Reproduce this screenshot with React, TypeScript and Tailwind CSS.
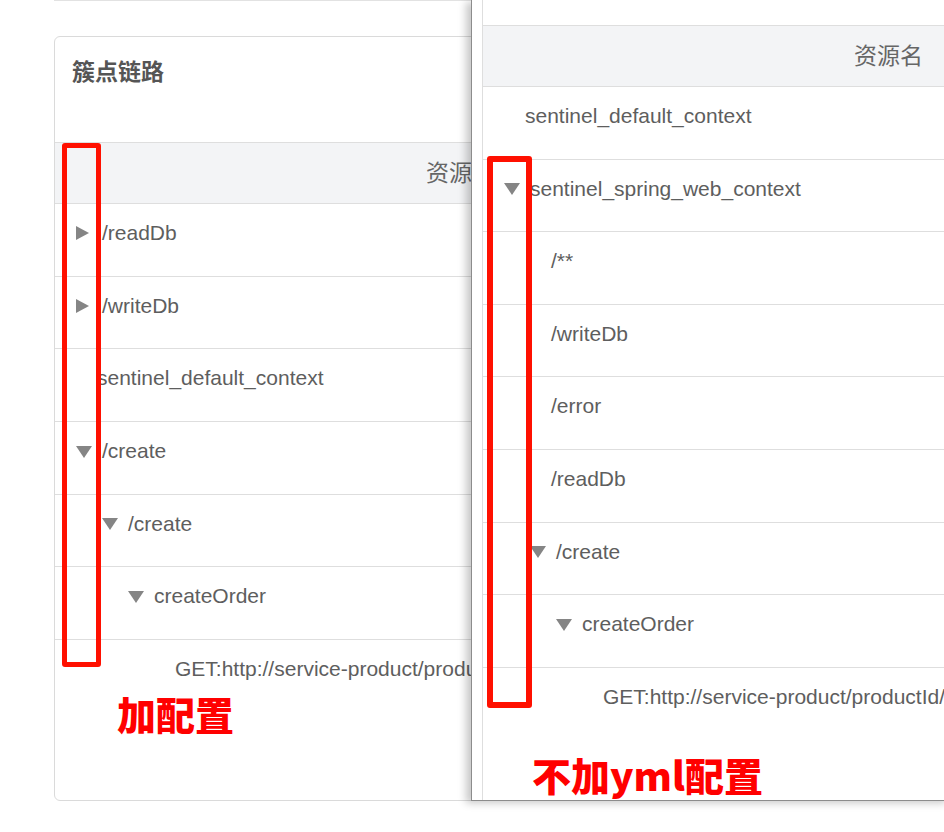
import React from 'react';

type Row = { name: string; depth: number; toggle?: 'open' | 'closed' };

const leftRows: Row[] = [
  { name: '/readDb', depth: 0, toggle: 'closed' },
  { name: '/writeDb', depth: 0, toggle: 'closed' },
  { name: 'sentinel_default_context', depth: 0 },
  { name: '/create', depth: 0, toggle: 'open' },
  { name: '/create', depth: 1, toggle: 'open' },
  { name: 'createOrder', depth: 2, toggle: 'open' },
  { name: 'GET:http://service-product/productId/{id}', depth: 3 },
];

const rightRows: Row[] = [
  { name: 'sentinel_default_context', depth: 0 },
  { name: 'sentinel_spring_web_context', depth: 0, toggle: 'open' },
  { name: '/**', depth: 1 },
  { name: '/writeDb', depth: 1 },
  { name: '/error', depth: 1 },
  { name: '/readDb', depth: 1 },
  { name: '/create', depth: 1, toggle: 'open' },
  { name: 'createOrder', depth: 2, toggle: 'open' },
  { name: 'GET:http://service-product/productId/{id}', depth: 3 },
];

function Caret({ open }: { open: boolean }) {
  // tree-grid expander: grey solid triangle
  return open ? (
    <svg width="16" height="13" viewBox="0 0 16 13" className="shrink-0">
      <polygon points="0,1 16,1 8,13" fill="#858585" />
    </svg>
  ) : (
    <svg width="13" height="14" viewBox="0 0 13 14" className="shrink-0">
      <polygon points="0,0 13,7 0,14" fill="#858585" />
    </svg>
  );
}

function TreeRow({ row, last }: { row: Row; last: boolean }) {
  const pad = row.toggle ? 21 + 26 * row.depth : 42 + 26 * row.depth;
  return (
    <div className={`box-border h-[72.7px] pt-[17px] ${last ? '' : 'border-b border-[#dedede]'}`}>
      <div className="flex items-center h-[24px] whitespace-nowrap" style={{ paddingLeft: pad }}>
        {row.toggle && (
          <span className="w-[26px] flex items-center">
            <Caret open={row.toggle === 'open'} />
          </span>
        )}
        <span className="text-[21px] leading-[24px] text-[#5e5e5e]">{row.name}</span>
      </div>
    </div>
  );
}

function TableHead() {
  return (
    <div className="box-border h-[62px] border-y border-[#dedede] bg-[#f3f4f6] pt-[17px] pl-[371px]">
      <span className="text-[23px] leading-[26px] text-[#666] whitespace-nowrap">资源名</span>
    </div>
  );
}

export default function App() {
  return (
    <div className="relative w-[944px] h-[832px] overflow-hidden bg-white font-['Liberation_Sans','Noto_Sans_CJK_SC',sans-serif]">
      {/* left screenshot: config in place */}
      <div className="ml-[54px] h-px bg-[#e2e2e2]" />
      <div className="ml-[54px] mt-[35px] w-[880px] h-[765px] border border-[#dadada] rounded-[6px] overflow-hidden">
        <div className="h-[105px] pl-[17px] pt-[22px]">
          <span className="text-[23px] leading-[26px] font-bold text-[#555]">簇点链路</span>
        </div>
        <TableHead />
        {leftRows.map((r, i) => (
          <TreeRow key={i} row={r} last={i === leftRows.length - 1} />
        ))}
      </div>

      {/* right screenshot: without yml config, pasted over */}
      <div className="absolute left-[471px] top-0 w-[480px] h-[801px] bg-white border-l border-b border-[#8c8c8c] shadow-[-5px_2px_8px_rgba(0,0,0,0.22)] pl-[10px]">
        <div className="h-full border-l border-[#dedede] overflow-hidden">
          <div className="h-[25px]" />
          <TableHead />
          <div className="[&>div]:h-[72.6px]">
            {rightRows.map((r, i) => (
              <TreeRow key={i} row={r} last={i === rightRows.length - 1} />
            ))}
          </div>
        </div>
      </div>

      {/* annotations */}
      <div className="absolute left-[62px] top-[143px] w-[39px] h-[524px] border-[5px] border-[#ff1000] rounded-[3px]" />
      <div className="absolute left-[487px] top-[156px] w-[45px] h-[552px] border-[6px] border-[#ff1000] rounded-[3px]" />
      <div className="absolute left-[117px] top-[694px] text-[39px] leading-none font-black text-[#ff0000] font-['Noto_Sans_CJK_SC',sans-serif] whitespace-nowrap">
        加配置
      </div>
      <div className="absolute left-[532px] top-[755px] text-[39px] leading-none font-black text-[#ff0000] font-['Noto_Sans_CJK_SC',sans-serif] whitespace-nowrap">
        不加yml配置
      </div>
    </div>
  );
}
